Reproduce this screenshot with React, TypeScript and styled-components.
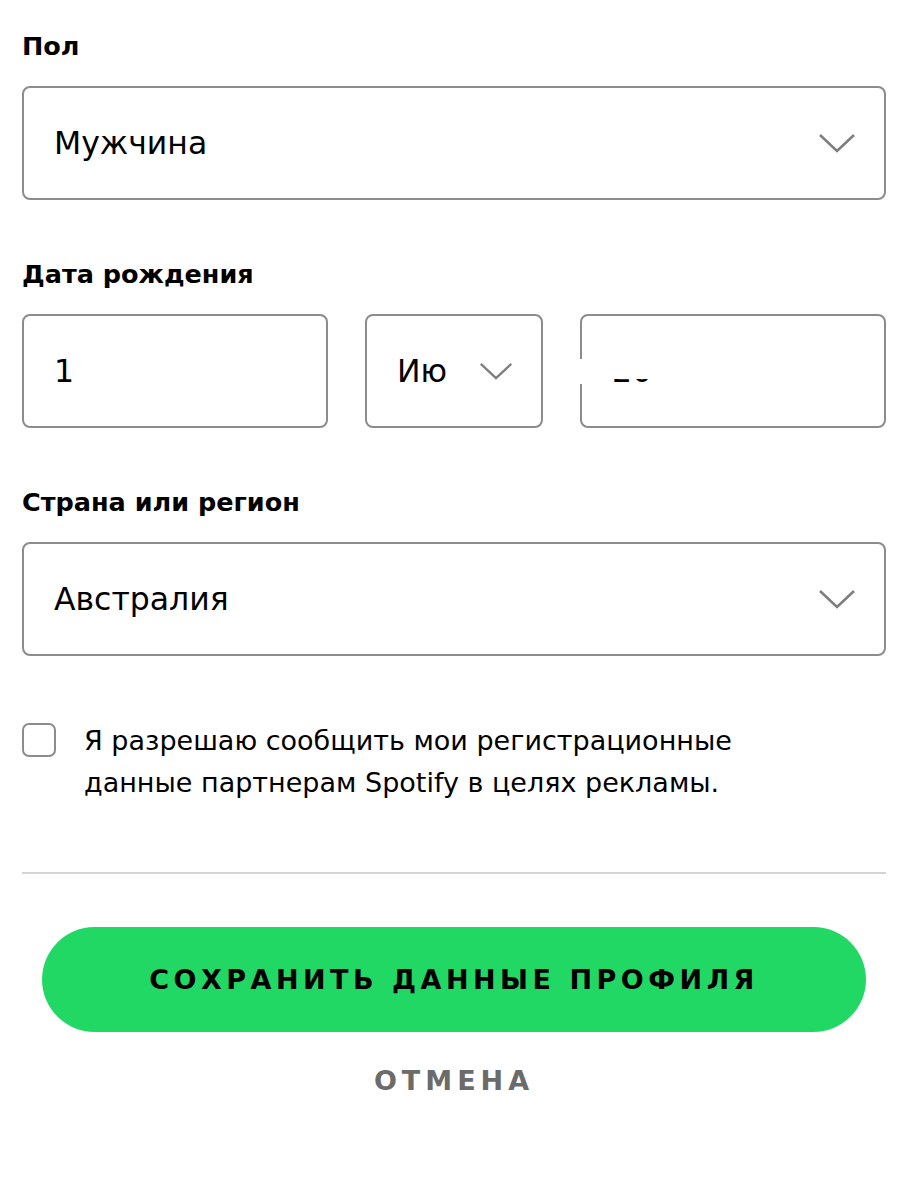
import { createGlobalStyle, styled } from "styled-components";

const GlobalStyle = createGlobalStyle`
  body {
    margin: 0;
    background: #ffffff;
    font-family: "DejaVu Sans", "Noto Sans", sans-serif;
    color: #000;
  }
`;

const Page = styled.div`
  display: flex;
  flex-direction: column;
  padding: 28px 21px 0 22px;
  width: 907px;
  box-sizing: border-box;
`;

const Label = styled.div`
  font-size: 25.5px;
  font-weight: 700;
  line-height: 36px;
  margin-bottom: 22px;
`;

const Field = styled.div`
  display: flex;
  flex-direction: column;
  margin-bottom: 56px;
`;

const Box = styled.div<{ $width?: string }>`
  position: relative;
  display: flex;
  align-items: center;
  justify-content: space-between;
  box-sizing: border-box;
  height: 114px;
  width: ${(p) => p.$width ?? "100%"};
  border: 2px solid #8c8c8c;
  border-radius: 8px;
  padding: 0 28px 0 30px;
  font-size: 31.5px;
  background: #fff;
`;

const DateRow = styled.div`
  display: flex;
  gap: 37px;
`;

const Chevron = ({ size = 38 }: { size?: number }) => (
  <svg width={size} height={size / 2 + 2} viewBox="0 0 38 21" fill="none">
    <path d="M2 2L19 18L36 2" stroke="#7f7f7f" strokeWidth="2.6" strokeLinejoin="miter" />
  </svg>
);

const Redacted = styled.span`
  display: inline-block;
  clip-path: inset(72% 0 0 0);
`;

const Patch = styled.span`
  position: absolute;
  left: -4px;
  top: 43px;
  width: 20px;
  height: 25px;
  background: #fff;
`;

const Consent = styled.label`
  display: flex;
  gap: 28px;
  align-items: flex-start;
  margin-top: 8px;
  font-size: 27px;
  line-height: 42px;
`;

const CheckBox = styled.span`
  flex: none;
  width: 34px;
  height: 34px;
  margin-top: 3px;
  box-sizing: border-box;
  border: 2px solid #8c8c8c;
  border-radius: 7px;
`;

const Divider = styled.hr`
  border: none;
  border-top: 2px solid #d4d4d4;
  margin: 68px 0 0 0;
`;

const SaveButton = styled.button`
  margin: 53px 20px 0 20px;
  height: 105px;
  border: none;
  border-radius: 53px;
  background: #22d865;
  color: #000;
  font-family: "DejaVu Sans", "Noto Sans", sans-serif;
  font-size: 27px;
  font-weight: 700;
  letter-spacing: 4.5px;
  cursor: pointer;
`;

const CancelButton = styled.button`
  align-self: center;
  margin-top: 32px;
  border: none;
  background: transparent;
  color: #6b6b6b;
  font-family: "DejaVu Sans", "Noto Sans", sans-serif;
  font-size: 27px;
  font-weight: 700;
  letter-spacing: 5px;
  cursor: pointer;
`;

export default function App() {
  return (
    <Page>
      <GlobalStyle />
      <Field>
        <Label>Пол</Label>
        <Box>
          <span>Мужчина</span>
          <Chevron />
        </Box>
      </Field>
      <Field>
        <Label>Дата рождения</Label>
        <DateRow>
          <Box $width="306px">
            <span>1</span>
          </Box>
          <Box $width="178px">
            <span>Ию</span>
            <Chevron size={34} />
          </Box>
          <Box $width="306px">
            <Patch />
            <Redacted>20</Redacted>
          </Box>
        </DateRow>
      </Field>
      <Field>
        <Label>Страна или регион</Label>
        <Box>
          <span>Австралия</span>
          <Chevron />
        </Box>
      </Field>
      <Consent>
        <CheckBox />
        <span>
          Я разрешаю сообщить мои регистрационные
          <br />
          данные партнерам Spotify в целях рекламы.
        </span>
      </Consent>
      <Divider />
      <SaveButton>СОХРАНИТЬ ДАННЫЕ ПРОФИЛЯ</SaveButton>
      <CancelButton>ОТМЕНА</CancelButton>
    </Page>
  );
}
